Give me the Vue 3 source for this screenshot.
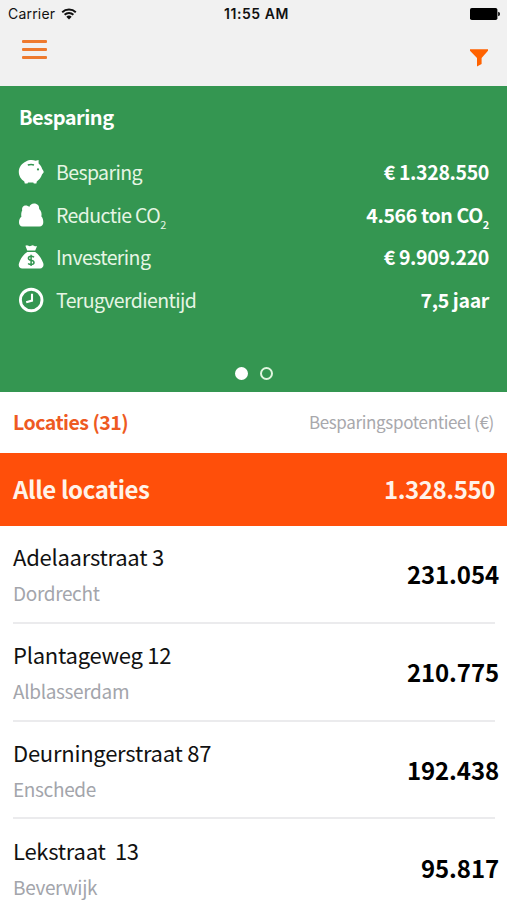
<template>
  <div class="screen">
    <div class="status-bar">
      <div class="carrier">
        <span>Carrier</span>
        <svg class="wifi" viewBox="0 0 16 12" aria-hidden="true">
          <path d="M1.2 4.2a9.8 9.8 0 0 1 13.6 0M3.6 6.8a6.3 6.3 0 0 1 8.8 0" fill="none" stroke="#111" stroke-width="1.9" />
          <path d="M5.3 8.7a3.9 3.9 0 0 1 5.4 0L8 11.5z" fill="#111" />
        </svg>
      </div>
      <span class="time">11:55 AM</span>
      <svg class="battery" viewBox="0 0 30 12" aria-hidden="true">
        <rect x="0" y="0" width="27.4" height="12" rx="1.8" fill="#000" />
        <path d="M28.2 3.8q1.8.4 1.8 2.2t-1.8 2.2z" fill="#000" />
      </svg>
    </div>

    <header class="nav-bar">
      <button class="menu" type="button" aria-label="Menu">
        <span></span>
        <span></span>
        <span></span>
      </button>
      <button class="filter" type="button" aria-label="Filter">
        <svg viewBox="0 0 18 18">
          <path d="M0 0.3h18v1.4l-6.4 7.2v6L7 17.4V9.1L0 1.7z" fill="#ff6200" />
        </svg>
      </button>
    </header>

    <section class="summary">
      <h1>Besparing</h1>
      <ul>
        <li v-for="stat in stats" :key="stat.label">
          <svg class="icon" viewBox="0 0 26 26" aria-hidden="true">
            <g v-if="stat.icon === 'pig'">
              <path d="M8 2.4C11 .8 15 .8 17.6 1.8L20.6 1V4.6C22.4 6.2 23.6 8 24.2 10L25.6 12.2V13.4L24 15.6C23.2 18.4 21.2 21 18.8 22.4L18.4 24.4H15.8L15.3 23.6H10L9.5 24.4H6.8L6.3 22.4C3 20.6 .8 16.9 .8 12.8 .8 8 4 4 8 2.4z" fill="#fff" />
              <path d="M9.8 6.1q3.2-1 6.2-.1" fill="none" stroke="#349651" stroke-width="1.6" />
              <circle cx="20" cy="10.4" r="1.1" fill="#349651" />
            </g>
            <path
              v-else-if="stat.icon === 'cloud'"
              d="M4.6 24.4C2.2 24.4 1 22.8 1 20.2c0-2.6 1.2-4.5 2.4-5.4C3 12.5 3.2 10 4.2 8.4 3.6 5.6 5.4 3.6 7.8 3.6c1.4 0 2.6.5 3.4 1.5C12 2.7 13.8 1.5 16 1.5c3.5 0 5.4 2.2 5.2 5.6 2 1.8 2.8 4.7 2.2 7.4 1.3 1.3 1.9 3.3 1.9 5.7 0 2.6-1.4 4.2-3.8 4.2z"
              fill="#fff"
            />
            <g v-else-if="stat.icon === 'bag'">
              <path d="M7.4 1.8q1.6-1 3 0 1.4.8 2.8 0 1.4-.9 2.8 0 1.5.9 3.1.2L17.2 6.6H9.2z" fill="#fff" />
              <path d="M9.2 7.9h8c3.5 2.3 6.2 6.5 8 11.2 1 2.8-.5 5.4-3.2 5.4H4.3c-2.8 0-4.3-2.6-3.2-5.4C2.6 14.4 5.6 10.2 9.2 7.9z" fill="#fff" />
              <path d="M16 13.2q-1-1-2.9-1-2.7 0-2.7 2 0 1.6 2.7 2.1 2.9.5 2.9 2.2 0 2-2.9 2-2 0-3-1M13.1 10.8v11.2" fill="none" stroke="#349651" stroke-width="1.5" />
            </g>
            <g v-else fill="none" stroke="#fff">
              <circle cx="13.2" cy="13" r="10.8" stroke-width="2.9" />
              <path d="M14 6.8v6.8L8.2 15.3" stroke-width="2.1" />
            </g>
          </svg>
          <span class="label">{{ stat.label }}<sub v-if="stat.sub">2</sub></span>
          <span class="amount">{{ stat.value }}<sub v-if="stat.sub">2</sub></span>
        </li>
      </ul>
      <div class="dots">
        <span class="dot active"></span>
        <span class="dot"></span>
      </div>
    </section>

    <div class="list-head">
      <span class="count">Locaties (31)</span>
      <span class="column">Besparingspotentieel (€)</span>
    </div>

    <div class="total">
      <span class="total-label">Alle locaties</span>
      <span class="total-value">1.328.550</span>
    </div>

    <ul class="locations">
      <li v-for="location in locations" :key="location.street">
        <div class="address">
          <span class="street">{{ location.street }}</span>
          <span class="city">{{ location.city }}</span>
        </div>
        <span class="saving">{{ location.saving }}</span>
      </li>
    </ul>
  </div>
</template>

<script setup>
const stats = [
  { icon: 'pig', label: 'Besparing', value: '€ 1.328.550' },
  { icon: 'cloud', label: 'Reductie CO', value: '4.566 ton CO', sub: true },
  { icon: 'bag', label: 'Investering', value: '€ 9.909.220' },
  { icon: 'clock', label: 'Terugverdientijd', value: '7,5 jaar' }
]

const locations = [
  { street: 'Adelaarstraat 3', city: 'Dordrecht', saving: '231.054' },
  { street: 'Plantageweg 12', city: 'Alblasserdam', saving: '210.775' },
  { street: 'Deurningerstraat 87', city: 'Enschede', saving: '192.438' },
  { street: 'Lekstraat  13', city: 'Beverwijk', saving: '95.817' }
]
</script>

<style>
body {
  margin: 0;
  background: #fff;
}
</style>

<style scoped>
.screen {
  width: 507px;
  height: 900px;
  overflow: hidden;
  background: #fff;
  color: #111;
  font-family: "Noto Sans CJK JP", "Open Sans", sans-serif;
}

ul {
  margin: 0;
  padding: 0;
  list-style: none;
}

button {
  padding: 0;
  border: 0;
  background: none;
}

.status-bar {
  display: grid;
  grid-template-columns: 1fr auto 1fr;
  align-items: center;
  height: 27px;
  padding: 0 7px 0 8px;
  background: #f1f1f1;
  font-family: Inter, sans-serif;
  font-size: 14px;
  line-height: 27px;
}

.carrier {
  display: flex;
  align-items: center;
  gap: 6px;
  letter-spacing: 0.2px;
}

.wifi {
  width: 16px;
  height: 12px;
}

.time {
  padding-left: 5px;
  font-weight: 600;
  letter-spacing: 0.55px;
}

.battery {
  justify-self: end;
  width: 30px;
  height: 12px;
}

.nav-bar {
  display: flex;
  justify-content: space-between;
  align-items: flex-start;
  height: 59px;
  padding: 0 19px 0 22px;
  box-sizing: border-box;
  background: #f1f1f1;
}

.menu {
  display: flex;
  flex-direction: column;
  gap: 5px;
  padding-top: 13px;
}

.menu span {
  width: 25px;
  height: 3px;
  border-radius: 1px;
  background: #ee7a2e;
}

.filter {
  padding-top: 22px;
}

.filter svg {
  display: block;
  width: 18px;
  height: 18px;
}

.summary {
  height: 306px;
  padding: 17px 18px 0 19px;
  box-sizing: border-box;
  background: #349651;
  color: #fff;
}

h1 {
  margin: 0 0 27px;
  font-size: 20px;
  font-weight: 700;
  line-height: 28px;
  letter-spacing: -0.5px;
}

.summary li {
  display: flex;
  align-items: center;
  height: 28px;
  margin: 0 0 14.7px -1px;
  font-size: 19.5px;
  line-height: 28px;
}

.icon {
  width: 26px;
  height: 26px;
  margin-right: 12px;
}

.label {
  flex: 1;
  color: #e6f5e4;
  letter-spacing: -0.6px;
}

.amount {
  font-weight: 700;
  letter-spacing: -0.35px;
}

sub {
  position: relative;
  top: 6px;
  font-size: 11px;
  line-height: 0;
  vertical-align: baseline;
}

.dots {
  display: flex;
  justify-content: center;
  gap: 12px;
  padding-top: 38px;
}

.dot {
  width: 13px;
  height: 13px;
  box-sizing: border-box;
  border: 2px solid #e0f5df;
  border-radius: 50%;
}

.dot.active {
  border-color: #fff;
  background: #fff;
}

.list-head {
  display: flex;
  justify-content: space-between;
  align-items: center;
  height: 61px;
  padding: 0 13px 2px;
  box-sizing: border-box;
}

.count {
  color: #ee5a22;
  font-size: 19.5px;
  font-weight: 700;
  letter-spacing: -0.5px;
}

.column {
  color: #a8a8ac;
  font-size: 17px;
  letter-spacing: -0.35px;
}

.total {
  display: flex;
  justify-content: space-between;
  align-items: center;
  height: 73px;
  padding: 0 12px 2px 13px;
  box-sizing: border-box;
  background: #ff4f0a;
  color: #fff3e9;
  font-size: 24px;
  font-weight: 700;
  letter-spacing: -0.4px;
}

.locations li {
  display: flex;
  justify-content: space-between;
  align-items: center;
  height: 97.8px;
  margin: 0 12px 0 13px;
  box-sizing: border-box;
  border-bottom: 2px solid #ebebed;
}

.address {
  display: flex;
  flex-direction: column;
  padding-top: 3px;
}

.street {
  font-size: 22px;
  line-height: 35px;
  letter-spacing: -0.25px;
  white-space: pre;
}

.city {
  color: #a3a5ab;
  font-size: 19px;
  line-height: 37px;
  letter-spacing: -0.35px;
}

.saving {
  margin-right: -4px;
  color: #000;
  font-size: 24px;
  font-weight: 700;
  letter-spacing: -0.1px;
}
</style>
